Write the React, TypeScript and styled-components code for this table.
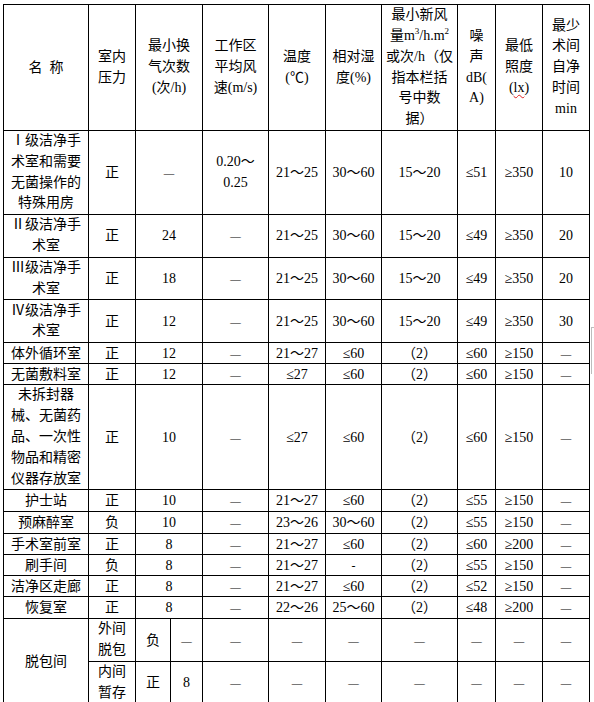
import React from "react";
import styled, { createGlobalStyle } from "styled-components";

const Global = createGlobalStyle`
  html, body { margin: 0; padding: 0; background: #fff; }
  body { font-family: "Liberation Serif", "Noto Sans CJK SC", serif; color: #000; }
`;

const Page = styled.div`
  position: relative;
  padding: 4px 0 0 3px;
  width: 594px;
  height: 702px;
  overflow: hidden;
  box-sizing: border-box;
`;

const Table = styled.table`
  border-collapse: collapse;
  table-layout: fixed;
  width: 587px;
  font-size: 14px;
  line-height: 19px;
`;

const Col = styled.col<{ $w: number }>`
  width: ${(p) => p.$w}px;
`;

const Row = styled.tr<{ $h: number }>`
  height: ${(p) => p.$h}px;
`;

const Cell = styled.td`
  border: 1px solid #000;
  padding: 0;
  text-align: center;
  vertical-align: middle;
  white-space: nowrap;
  overflow: hidden;
  line-height: 19px;
`;

const Multi = styled.span`
  display: inline-block;
  vertical-align: middle;
  line-height: 20.8px;
`;

const Dash = styled.span`
  font-size: 10.5px;
  line-height: 0;
  font-family: "Liberation Serif", serif;
`;

const Hyphen = styled.span`
  font-family: "Liberation Serif", serif;
  font-size: 12px;
  line-height: 0;
`;

const Sup = styled.sup`
  font-size: 9px;
  line-height: 0;
`;

const Wavy = styled.span`
  text-decoration: underline wavy #d22;
  text-decoration-thickness: 1px;
  text-underline-offset: 2px;
`;

const Handle = styled.div`
  position: absolute;
  left: 591px;
  top: 327px;
  width: 3px;
  height: 46px;
  border-left: 1px solid #bdbdbd;
  border-top: 1px solid #bdbdbd;
`;

const D = () => <Dash>—</Dash>;

type Content = React.ReactNode | React.ReactNode[];

const Lines = ({ v }: { v: Content }) => {
  if (Array.isArray(v)) {
    return (
      <Multi>
        {v.map((l, i) => (
          <React.Fragment key={i}>
            {i > 0 && <br />}
            {l}
          </React.Fragment>
        ))}
      </Multi>
    );
  }
  return <>{v}</>;
};

const widths = [85, 47, 35, 32, 66, 57, 56, 76, 38, 47, 47];

const header: Content[] = [
  "名\u2002称",
  ["室内", "压力"],
  ["最小换", "气次数", "(次/h)"],
  ["工作区", "平均风", "速(m/s)"],
  ["温度", "(℃)"],
  ["相对湿", "度(%)"],
  [
    "最小新风",
    <>
      量m<Sup>3</Sup>/h.m<Sup>2</Sup>
    </>,
    "或次/h（仅",
    "指本栏括",
    "号中数",
    "据）",
  ],
  ["噪", "声", "dB(", "A)"],
  [
    "最低",
    "照度",
    <>
      (<Wavy>lx</Wavy>)
    </>,
  ],
  ["最少", "术间", "自净", "时间", " min"],
];

type BodyRow = { h: number; cells: Content[] };

const dash = <D />;

const body: BodyRow[] = [
  {
    h: 84,
    cells: [
      ["Ⅰ级洁净手", "术室和需要", "无菌操作的", "特殊用房"],
      "正",
      dash,
      ["0.20～", "0.25"],
      "21～25",
      "30～60",
      "15～20",
      "≤51",
      "≥350",
      "10",
    ],
  },
  { h: 42, cells: [["Ⅱ级洁净手", "术室"], "正", "24", dash, "21～25", "30～60", "15～20", "≤49", "≥350", "20"] },
  { h: 42, cells: [["Ⅲ级洁净手", "术室"], "正", "18", dash, "21～25", "30～60", "15～20", "≤49", "≥350", "20"] },
  { h: 43, cells: [["Ⅳ级洁净手", "术室"], "正", "12", dash, "21～25", "30～60", "15～20", "≤49", "≥350", "30"] },
  { h: 21, cells: ["体外循环室", "正", "12", dash, "21～27", "≤60", "（2）", "≤60", "≥150", dash] },
  { h: 21, cells: ["无菌敷料室", "正", "12", dash, "≤27", "≤60", "（2）", "≤60", "≥150", dash] },
  {
    h: 105,
    cells: [
      ["未拆封器", "械、无菌药", "品、一次性", "物品和精密", "仪器存放室"],
      "正",
      "10",
      dash,
      "≤27",
      "≤60",
      "（2）",
      "≤60",
      "≥150",
      dash,
    ],
  },
  { h: 22, cells: ["护士站", "正", "10", dash, "21～27", "≤60", "（2）", "≤55", "≥150", dash] },
  { h: 22, cells: ["预麻醉室", "负", "10", dash, "23～26", "30～60", "（2）", "≤55", "≥150", dash] },
  { h: 21, cells: ["手术室前室", "正", "8", dash, "21～27", "≤60", "（2）", "≤60", "≥200", dash] },
  { h: 21, cells: ["刷手间", "负", "8", dash, "21～27", <Hyphen>-</Hyphen>, "（2）", "≤55", "≥150", dash] },
  { h: 21, cells: ["洁净区走廊", "正", "8", dash, "21～27", "≤60", "（2）", "≤52", "≥150", dash] },
  { h: 22, cells: ["恢复室", "正", "8", dash, "22～26", "25～60", "（2）", "≤48", "≥200", dash] },
];

const restDashes = Array.from({ length: 7 });

export default function App() {
  return (
    <>
      <Global />
      <Page>
        <Table>
          <colgroup>
            {widths.map((w, i) => (
              <Col key={i} $w={w} />
            ))}
          </colgroup>
          <tbody>
            <Row $h={126}>
              {header.map((c, i) => (
                <Cell key={i} colSpan={i === 2 ? 2 : 1}>
                  <Lines v={c} />
                </Cell>
              ))}
            </Row>
            {body.map((r, ri) => (
              <Row key={ri} $h={r.h}>
                {r.cells.map((c, i) => (
                  <Cell key={i} colSpan={i === 2 ? 2 : 1}>
                    <Lines v={c} />
                  </Cell>
                ))}
              </Row>
            ))}
            <Row $h={42}>
              <Cell rowSpan={2}>脱包间</Cell>
              <Cell>
                <Lines v={["外间", "脱包"]} />
              </Cell>
              <Cell>负</Cell>
              <Cell>
                <D />
              </Cell>
              {restDashes.map((_, i) => (
                <Cell key={i}>
                  <D />
                </Cell>
              ))}
            </Row>
            <Row $h={42}>
              <Cell>
                <Lines v={["内间", "暂存"]} />
              </Cell>
              <Cell>正</Cell>
              <Cell>8</Cell>
              {restDashes.map((_, i) => (
                <Cell key={i}>
                  <D />
                </Cell>
              ))}
            </Row>
          </tbody>
        </Table>
        <Handle />
      </Page>
    </>
  );
}
